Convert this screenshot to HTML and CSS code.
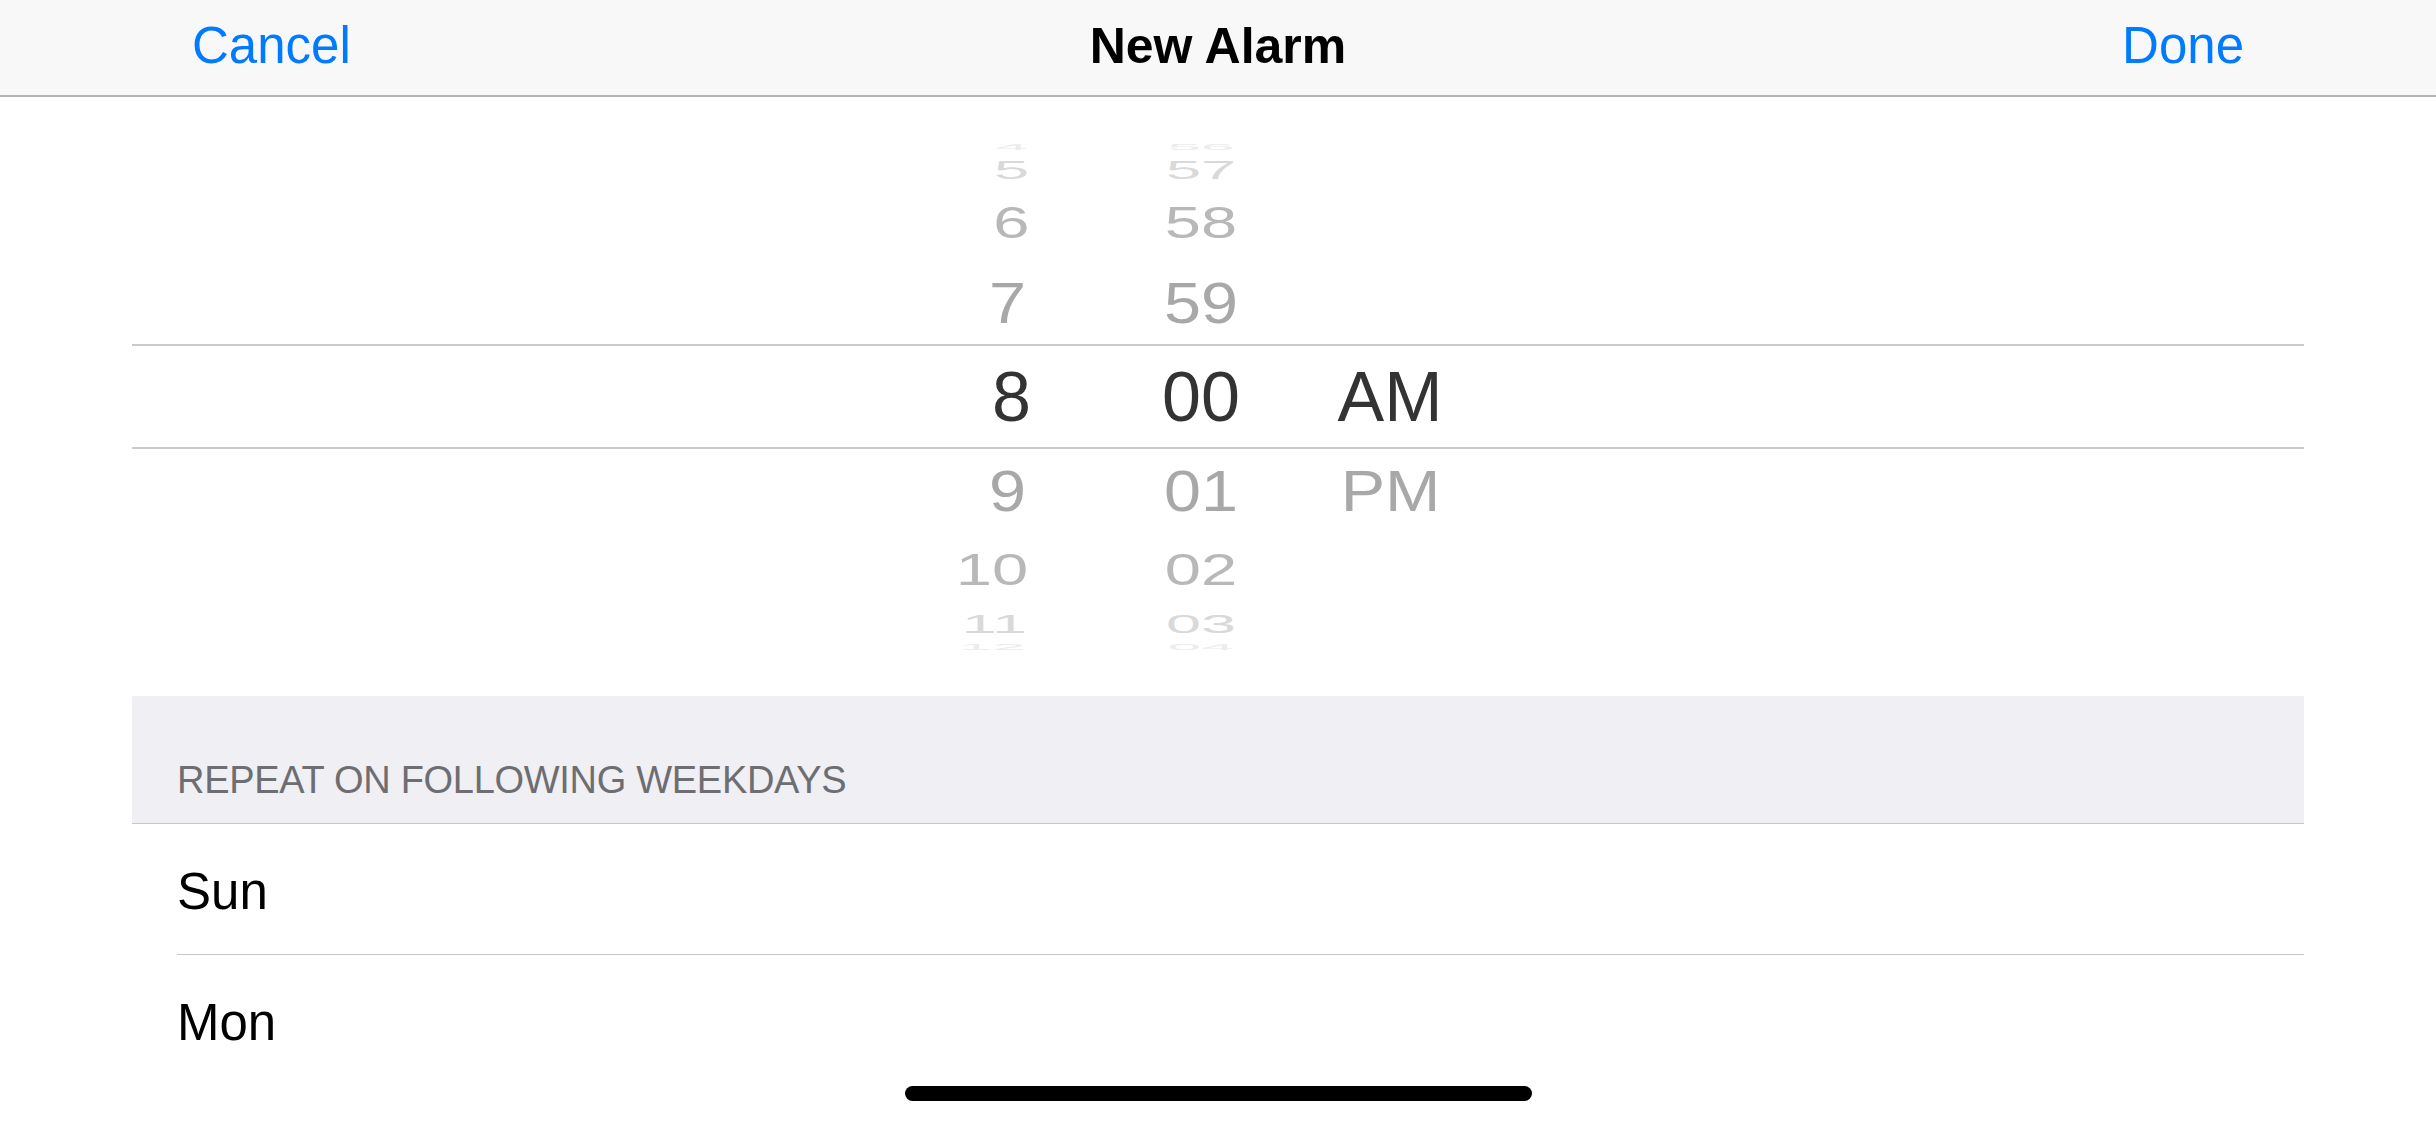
FILE: index.html
```html
<!DOCTYPE html>
<html lang="en">
<head>
<meta charset="utf-8">
<title>New Alarm</title>
<link rel="stylesheet" href="styles.css">
</head>
<body>
  <header class="nav">
    <span class="nav-btn nav-cancel">Cancel</span>
    <span class="nav-title">New Alarm</span>
    <span class="nav-btn nav-done">Done</span>
  </header>

  <section class="picker">
    <div class="wheel wheel-hour">
      <div class="cell r4"><span>4</span></div>
      <div class="cell r3"><span>5</span></div>
      <div class="cell r2"><span>6</span></div>
      <div class="cell r1"><span>7</span></div>
      <div class="cell r0"><span>8</span></div>
      <div class="cell r1"><span>9</span></div>
      <div class="cell r2"><span>10</span></div>
      <div class="cell r3"><span>11</span></div>
      <div class="cell r4"><span>12</span></div>
    </div>
    <div class="wheel wheel-min">
      <div class="cell r4"><span>56</span></div>
      <div class="cell r3"><span>57</span></div>
      <div class="cell r2"><span>58</span></div>
      <div class="cell r1"><span>59</span></div>
      <div class="cell r0"><span>00</span></div>
      <div class="cell r1"><span>01</span></div>
      <div class="cell r2"><span>02</span></div>
      <div class="cell r3"><span>03</span></div>
      <div class="cell r4"><span>04</span></div>
    </div>
    <div class="wheel wheel-ampm">
      <div class="cell r4"></div>
      <div class="cell r3"></div>
      <div class="cell r2"></div>
      <div class="cell r1"></div>
      <div class="cell r0"><span>AM</span></div>
      <div class="cell r1"><span>PM</span></div>
      <div class="cell r2"></div>
      <div class="cell r3"></div>
      <div class="cell r4"></div>
    </div>
    <div class="band"></div>
  </section>

  <section class="section">
    <div class="section-header">REPEAT ON FOLLOWING WEEKDAYS</div>
    <div class="row"><div class="row-inner">Sun</div></div>
    <div class="row row-last"><div class="row-inner">Mon</div></div>
  </section>

  <div class="home-indicator"></div>
</body>
</html>
```

FILE: styles.css
```css
* {
  box-sizing: border-box;
}

html, body {
  margin: 0;
  padding: 0;
  height: 100%;
  overflow: hidden;
  background: #ffffff;
  font-family: "Liberation Sans", Arial, Helvetica, sans-serif;
}

/* Navigation bar */
.nav {
  display: grid;
  grid-template-columns: 1fr auto 1fr;
  align-items: center;
  height: 97px;
  padding: 0 192px 4px;
  background: #f8f8f8;
  border-bottom: 2px solid #b4b4b4;
}

.nav-btn {
  font-size: 51px;
  line-height: 1;
  color: #007aff;
}

.nav-cancel {
  justify-self: start;
}

.nav-done {
  justify-self: end;
}

.nav-title {
  font-size: 50px;
  line-height: 1;
  font-weight: 700;
  color: #000;
}

/* Time picker */
.picker {
  position: relative;
  height: 599px;
  display: flex;
  align-items: center;
  padding-left: 881px;
}

.wheel {
  width: 150px;
  display: flex;
  flex-direction: column;
}

.wheel-min {
  margin-left: 95px;
}

.wheel-ampm {
  margin-left: 39px;
}

.cell {
  display: flex;
  align-items: center;
  justify-content: center;
  overflow: hidden;
  font-size: 70px;
  line-height: 1;
}

.wheel-hour .cell {
  justify-content: flex-end;
}

.wheel-hour .r1 span {
  margin-right: 4px;
}

.cell span {
  display: block;
  white-space: nowrap;
}

.r0 {
  height: 104px;
  color: #333333;
}

.r1 {
  height: 84px;
  color: #a8a8a8;
}

.r1 span {
  transform: scale(0.95, 0.83);
}

.r2 {
  height: 75px;
  color: #b8b8b8;
}

.r2 span {
  transform: scale(0.93, 0.64);
}

.r3 {
  height: 32px;
  color: #d9d9d9;
}

.r3 span {
  transform: scale(0.9, 0.36);
}

.r4 {
  height: 14px;
  color: #ececec;
}

.r4 span {
  transform: scale(0.86, 0.12);
}

.band {
  position: absolute;
  left: 132px;
  right: 132px;
  top: 247px;
  height: 105px;
  border-top: 2px solid #cacaca;
  border-bottom: 2px solid #cacaca;
  pointer-events: none;
}

/* Weekday section */
.section {
  padding: 0 132px;
}

.section-header {
  height: 128px;
  padding: 65px 0 0 45px;
  background: #efeff4;
  border-bottom: 1px solid #c6c6ca;
  font-size: 38px;
  line-height: 38px;
  color: #6d6d72;
  letter-spacing: -0.3px;
}

.row {
  padding-left: 45px;
}

.row-inner {
  height: 131px;
  padding-top: 4px;
  display: flex;
  align-items: center;
  border-bottom: 1px solid #c8c7cc;
  font-size: 51px;
  line-height: 1;
  color: #000;
}

.row-last .row-inner {
  border-bottom: none;
}

/* Home indicator overlay */
.home-indicator {
  position: fixed;
  left: 50%;
  bottom: 24px;
  width: 627px;
  height: 15px;
  margin-left: -313px;
  border-radius: 8px;
  background: #000;
}
```
